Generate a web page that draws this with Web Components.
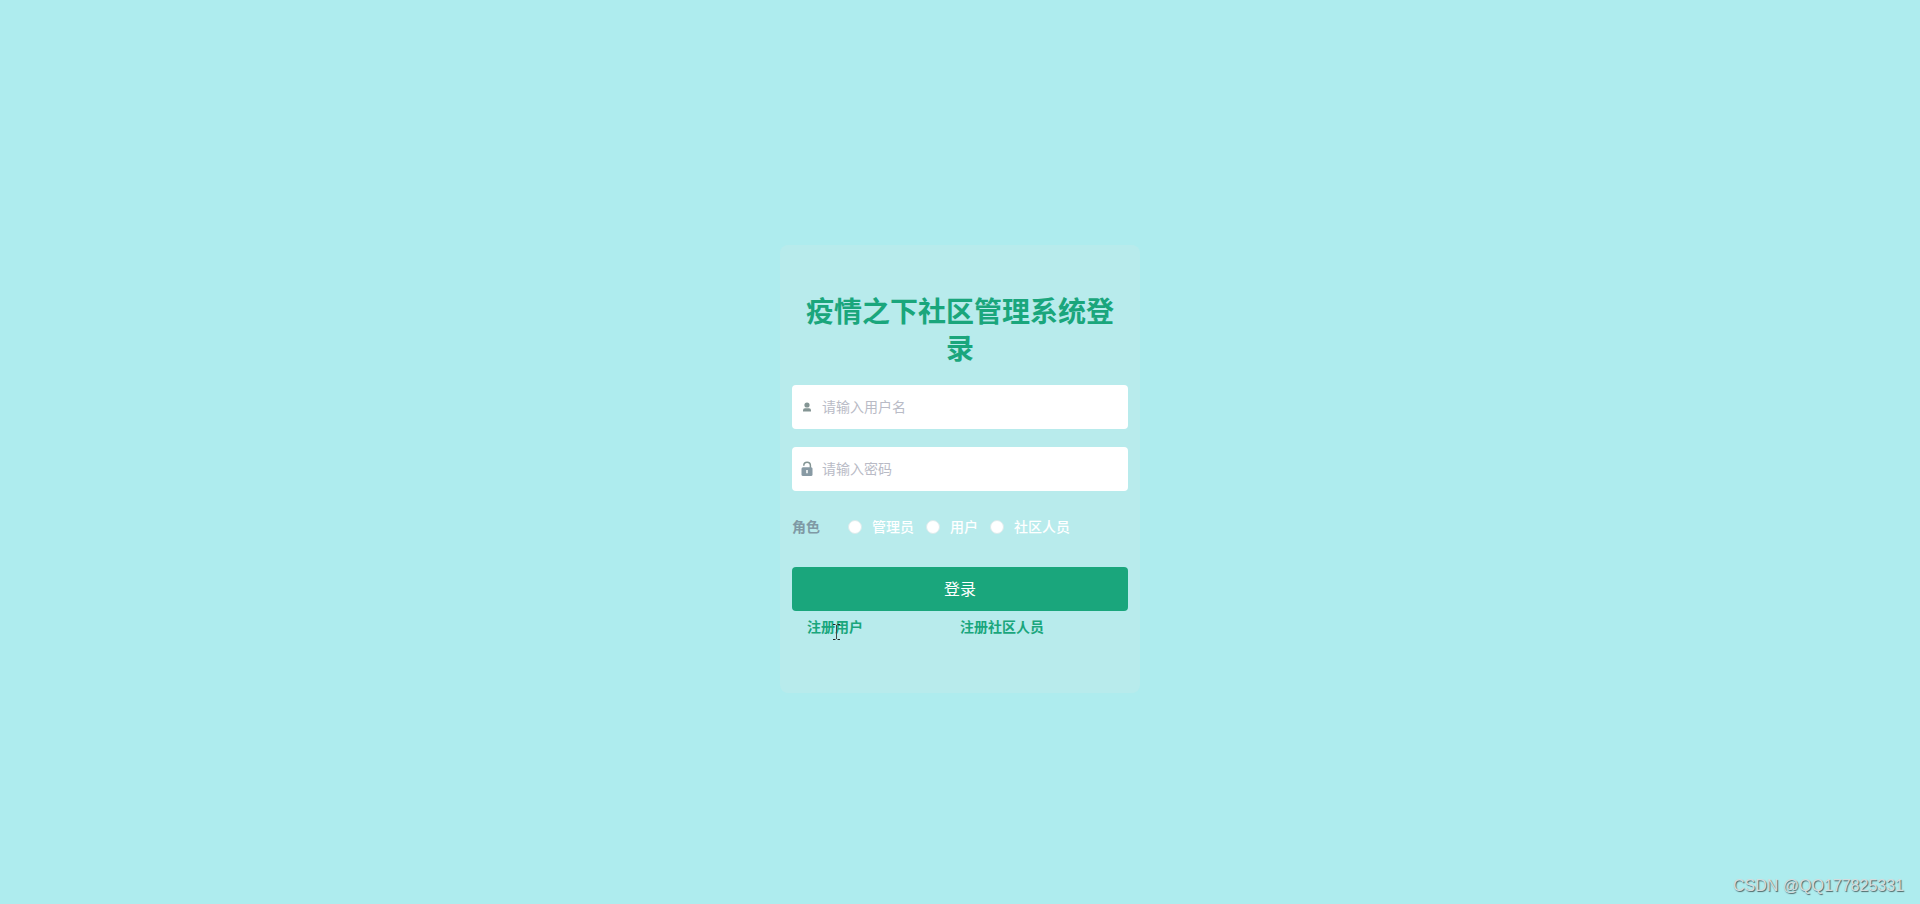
<!DOCTYPE html>
<html lang="zh-CN">
<head>
<meta charset="utf-8">
<meta name="viewport" content="width=device-width, initial-scale=1">
<title>疫情之下社区管理系统登录</title>
<style>
  html, body { margin: 0; }
  body {
    background: #aeecee;
    color: #1aa67c;
    font-family: "Noto Sans", "Noto Sans CJK SC", sans-serif;
    font-size: 14px;
    line-height: 20px;
  }
</style>
</head>
<body>
<login-page></login-page>
<script>
const define = (name, html, setup) => {
  const template = document.createElement('template');
  template.innerHTML = html;
  customElements.define(name, class extends HTMLElement {
    constructor() {
      super();
      this.attachShadow({ mode: 'open' }).append(template.content.cloneNode(true));
    }
    connectedCallback() {
      if (setup) setup(this, this.shadowRoot);
    }
  });
};

define('login-card', `
  <style>
    :host {
      display: block; box-sizing: border-box; width: 100%; max-width: 360px;
      padding: 48px 12px 56px; border-radius: 8px; background: #b8ebec;
    }
    h1 { margin: 0 0 18px; padding: 0 10px; font-size: 28px; line-height: 37px; font-weight: 700; text-align: center; }
  </style>
  <h1><slot name="title"></slot></h1>
  <slot></slot>`);

define('text-field', `
  <style>
    :host { display: block; margin-bottom: 18px; }
    label {
      display: flex; align-items: center; gap: 7px; box-sizing: border-box;
      height: 44px; padding: 0 7px; border-radius: 4px; background: #fff; color: #889aa4;
    }
    .icon { display: flex; flex: none; }
    input {
      flex: 1; min-width: 0; height: 40px; padding: 0; border: 0; outline: 0;
      background: transparent; color: #606266; font: inherit;
    }
    input::placeholder { color: #b9bbc6; opacity: 1; }
  </style>
  <label><span class="icon"><slot></slot></span><input></label>`,
  (host, root) => {
    const input = root.querySelector('input');
    input.type = host.getAttribute('type') || 'text';
    input.placeholder = host.getAttribute('placeholder');
    input.setAttribute('aria-label', host.getAttribute('placeholder'));
  });

define('role-picker', `
  <style>
    :host { display: block; margin-bottom: 22px; }
    div { display: flex; align-items: center; height: 36px; }
    .name { width: 56px; flex: none; color: #7f99a5; font-weight: 700; }
    .options { gap: 12px; }
    label { display: flex; align-items: center; gap: 10px; color: #fff; font-weight: 500; }
    input {
      appearance: none; box-sizing: border-box; width: 14px; height: 14px; margin: 0;
      border: 1px solid #dcebec; border-radius: 50%; background: #fff;
    }
    input:checked { border: 4px solid #1aa67c; }
  </style>
  <div role="radiogroup" aria-labelledby="name">
    <span class="name" id="name">角色</span>
    <div class="options">
      <label><input type="radio" name="role">管理员</label>
      <label><input type="radio" name="role">用户</label>
      <label><input type="radio" name="role">社区人员</label>
    </div>
  </div>`);

define('submit-button', `
  <style>
    :host { display: block; }
    button {
      display: block; width: 100%; height: 44px; padding: 0; border: 0; border-radius: 4px;
      background: #1aa67c; color: #fff; font: inherit; font-size: 16px; cursor: pointer;
    }
  </style>
  <button type="button"><slot></slot></button>`);

define('register-links', `
  <style>
    :host { display: grid; grid-template-columns: 1fr 1fr; padding: 6px 15px 0; }
    a { color: #1aa67c; font-weight: 700; text-decoration: none; justify-self: start; }
  </style>
  <a href="#user">注册用户</a>
  <a href="#staff">注册社区人员</a>`);

define('text-cursor', `
  <style>
    :host { position: absolute; left: 40px; top: 12px; pointer-events: none; }
    svg { display: block; }
  </style>
  <svg width="9" height="18" viewBox="0 0 9 18" fill="none" aria-hidden="true">
    <path d="M1 1.5h2.5M5.5 1.5H8M1 16.5h2.500M5.500 16.500H8" stroke="#222"/>
    <path d="M4.500 2v14" stroke="#444"/>
  </svg>`);

define('water-mark', `
  <style>
    :host {
      position: absolute; right: 16px; bottom: 8px;
      font-family: "Liberation Sans", sans-serif; font-size: 16px; line-height: 20px;
      color: #d4dcdd; text-shadow: 1px 1px 1px #4c6364;
    }
  </style>
  <slot></slot>`);

define('login-page', `
  <style>
    :host {
      position: relative; display: flex; flex-direction: column; align-items: center; justify-content: center;
      box-sizing: border-box; min-height: 100vh; padding-top: 33px;
    }
    svg { display: block; }
    .links { position: relative; }
  </style>
  <login-card>
    <span slot="title">疫情之下社区管理系统登录</span>
    <text-field placeholder="请输入用户名">
      <svg width="16" height="16" viewBox="0 0 16 16" fill="#849594" aria-hidden="true">
        <circle cx="8" cy="6" r="2.600"/>
        <path d="M4 12.500v-1.200Q4 9.300 6 9.300h4q2 0 2 2v1.200z"/>
      </svg>
    </text-field>
    <text-field type="password" placeholder="请输入密码">
      <svg width="16" height="16" viewBox="0 0 16 16" aria-hidden="true">
        <path d="M4.800 4.800V4.500a3.300 3.300 0 0 1 6.600 0V7" fill="none" stroke="#849594" stroke-width="1.500"/>
        <rect x="2.500" y="6.300" width="11" height="8.700" rx="1.500" fill="#889aa4"/>
        <path d="M8 9v3.200" stroke="#fff" stroke-width="1.500"/>
      </svg>
    </text-field>
    <role-picker></role-picker>
    <submit-button>登录</submit-button>
    <div class="links">
      <register-links></register-links>
      <text-cursor></text-cursor>
    </div>
  </login-card>
  <water-mark>CSDN @QQ177825331</water-mark>`);
</script>
</body>
</html>
